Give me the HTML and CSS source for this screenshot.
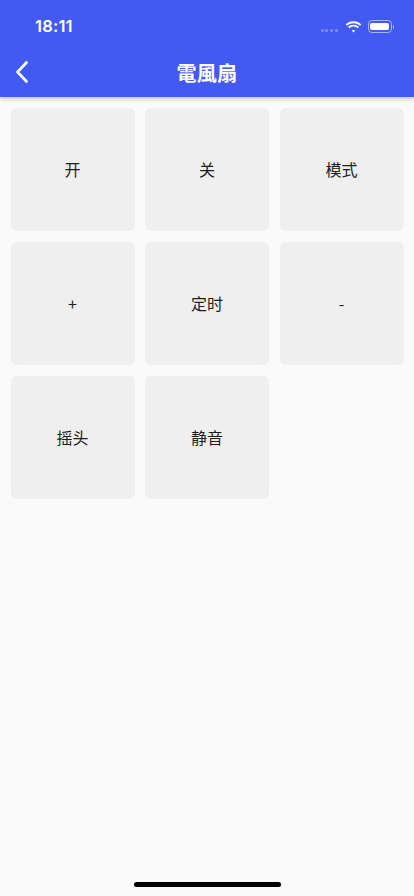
FILE: index.html
```html
<!DOCTYPE html>
<html lang="zh">
<head>
<meta charset="utf-8">
<meta name="viewport" content="width=device-width, initial-scale=1">
<title>電風扇</title>
<link rel="stylesheet" href="styles.css">
</head>
<body>
<div class="screen">
  <header class="appbar">
    <div class="status">
      <span class="time">18:11</span>
      <div class="status-icons">
        <span class="dots"><i></i><i></i><i></i><i></i></span>
        <svg class="wifi" width="17" height="12" viewBox="0 0 17 12">
          <path d="M8.5 2.2c2.5 0 4.8 1 6.5 2.6l1.3-1.4C14.2 1.4 11.5.2 8.5.2S2.8 1.4.7 3.4L2 4.8c1.7-1.6 4-2.6 6.5-2.6z" fill="#fff"/>
          <path d="M8.5 5.6c1.6 0 3 .6 4.1 1.6l1.3-1.4C12.5 4.5 10.6 3.7 8.5 3.7S4.5 4.5 3.1 5.8l1.3 1.4c1.1-1 2.5-1.6 4.1-1.6z" fill="#fff"/>
          <path d="M8.5 8.9c.7 0 1.3.3 1.8.7L8.5 11.6 6.7 9.6c.5-.4 1.1-.7 1.8-.7z" fill="#fff"/>
        </svg>
        <span class="battery"><span class="level"></span></span>
        <span class="cap"></span>
      </div>
    </div>
    <div class="toolbar">
      <button class="back" aria-label="back">
        <svg width="14" height="22" viewBox="0 0 14 22"><path d="M11.5 1.5 2.5 11l9 9.5" fill="none" stroke="#fff" stroke-width="2.6" stroke-linecap="round" stroke-linejoin="round"/></svg>
      </button>
      <h1 class="title">電風扇</h1>
    </div>
  </header>
  <main class="grid">
    <div class="card">开</div>
    <div class="card">关</div>
    <div class="card">模式</div>
    <div class="card">+</div>
    <div class="card">定时</div>
    <div class="card">-</div>
    <div class="card">摇头</div>
    <div class="card">静音</div>
  </main>
  <div class="home-indicator"></div>
</div>
</body>
</html>
```
FILE: styles.css
```css
* { box-sizing: border-box; }
html, body { margin: 0; padding: 0; }
body {
  background: #fafafa;
  font-family: "Noto Sans CJK SC", Roboto, "Noto Sans", sans-serif;
}
.screen {
  width: 414px;
  height: 896px;
  position: relative;
  overflow: hidden;
  background: #fafafa;
}
.appbar {
  background: #425af1;
  color: #fff;
  box-shadow: 0 2px 4px rgba(0,0,0,0.22);
  position: relative;
  z-index: 1;
}
.status {
  height: 44px;
  display: flex;
  align-items: center;
  justify-content: space-between;
  padding: 9px 20px 0 35px;
}
.time {
  font-family: Inter, "Liberation Sans", sans-serif;
  font-size: 16.5px;
  font-weight: 600;
  letter-spacing: 0.2px;
  margin-top: -1px;
}
.status-icons {
  display: flex;
  align-items: center;
}
.dots {
  display: flex;
  gap: 1.6px;
  margin-right: 7px;
  margin-top: 7px;
}
.dots i {
  width: 3px;
  height: 3px;
  border-radius: 50%;
  background: rgba(255,255,255,0.35);
}
.wifi { margin-right: 6px; margin-top: 1px; }
.battery {
  width: 24px;
  height: 12.5px;
  border: 1px solid rgba(255,255,255,0.55);
  border-radius: 4px;
  padding: 1.5px;
  display: flex;
}
.battery .level {
  flex: 1;
  background: #fff;
  border-radius: 2px;
}
.cap {
  width: 1.5px;
  height: 4px;
  background: rgba(255,255,255,0.55);
  border-radius: 0 1px 1px 0;
  margin-left: 1px;
}
.toolbar {
  height: 52.7px;
  display: flex;
  align-items: center;
  justify-content: center;
  position: relative;
}
.back {
  position: absolute;
  left: 15px;
  top: 16px;
  background: none;
  border: 0;
  padding: 0;
  width: 18px;
  height: 24px;
  display: flex;
  align-items: center;
}
.title {
  margin: 5px 0 0;
  font-size: 20px;
  font-weight: 700;
  letter-spacing: 0.3px;
}
.grid {
  display: grid;
  grid-template-columns: repeat(3, 1fr);
  gap: 11px 10.5px;
  padding: 11px 10.5px;
}
.card {
  height: 123px;
  background: #efefef;
  border-radius: 6px;
  display: flex;
  align-items: center;
  justify-content: center;
  font-size: 16px;
  color: #1e1e1e;
}
.home-indicator {
  position: absolute;
  left: 134px;
  bottom: 9px;
  width: 147px;
  height: 5px;
  border-radius: 3px;
  background: #000;
}
```
